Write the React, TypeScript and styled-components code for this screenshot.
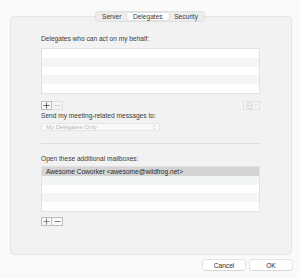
import styled, { createGlobalStyle } from "styled-components";

const GlobalStyle = createGlobalStyle`
  html, body {
    margin: 0;
    padding: 0;
    background: #fafafa;
  }
  body {
    font-family: "Liberation Sans", Arial, sans-serif;
    color: #333;
  }
`;

const Window = styled.div`
  width: 300px;
  height: 279px;
  box-sizing: border-box;
  padding: 11px 8px 0 10px;
  display: flex;
  flex-direction: column;
`;

const TabBar = styled.div`
  align-self: center;
  position: relative;
  z-index: 1;
  display: flex;
  height: 11px;
  box-sizing: border-box;
  margin-left: -2px;
  margin-bottom: -6px;
  padding: 1px;
  border: 1px solid #e0e0e0;
  border-radius: 3px;
  background: #ececec;
`;

const Tab = styled.div<{ active?: boolean }>`
  height: 100%;
  display: flex;
  align-items: center;
  justify-content: center;
  padding: 0 ${(p) => (p.active ? "6px" : "5.5px")};
  font-size: 6.6px;
  color: #3a3a3a;
  border-radius: 2px;
  background: ${(p) => (p.active ? "#fff" : "transparent")};
  box-shadow: ${(p) => (p.active ? "0 0 0 0.5px #d8d8d8" : "none")};
`;

const Panel = styled.div`
  height: 239px;
  box-sizing: border-box;
  padding: 18px 31px 0 30px;
  border: 1px solid #e5e5e5;
  border-radius: 4px;
  background: #f2f2f2;
  display: flex;
  flex-direction: column;
`;

const Label = styled.div<{ gap?: number; top?: number }>`
  font-size: 6.6px;
  line-height: 8px;
  color: #3a3a3a;
  margin-top: ${(p) => p.top ?? 0}px;
  margin-bottom: ${(p) => p.gap ?? 4}px;
`;

const List = styled.div`
  border: 1px solid #e2e2e2;
  background: #fff;
  display: flex;
  flex-direction: column;
`;

const Row = styled.div<{ striped?: boolean; selected?: boolean }>`
  height: 8.8px;
  box-sizing: border-box;
  padding-left: 4px;
  display: flex;
  align-items: center;
  font-size: 6.6px;
  color: #2a2a2a;
  background: ${(p) =>
    p.selected ? "#d4d4d4" : p.striped ? "#f4f5f5" : "#fff"};
`;

const ButtonRow = styled.div<{ top: number }>`
  margin-top: ${(p) => p.top}px;
  display: flex;
  justify-content: space-between;
  align-items: center;
`;

const PlusMinus = styled.div`
  display: flex;
`;

const SquareButton = styled.div<{ enabled?: boolean }>`
  width: 11px;
  height: 9px;
  box-sizing: border-box;
  display: flex;
  align-items: center;
  justify-content: center;
  border: 1px solid ${(p) => (p.enabled ? "#bdbdbd" : "#e0e0e0")};
  background: ${(p) => (p.enabled ? "#f8f8f8" : "#f4f4f4")};
  & + & {
    border-left: none;
  }
`;

const ActionPopup = styled.div`
  width: 17px;
  height: 9px;
  box-sizing: border-box;
  border: 1px solid #e0e0e0;
  background: #f5f5f5;
  display: flex;
  align-items: center;
  justify-content: center;
  gap: 1px;
`;

const SelectBox = styled.div`
  width: 119px;
  height: 8px;
  box-sizing: border-box;
  margin-top: 3px;
  padding: 0 3px 0 4px;
  border: 1px solid #e6e6e6;
  border-radius: 2px;
  background: #f9f9f9;
  display: flex;
  align-items: center;
  justify-content: space-between;
  font-size: 6px;
  color: #b8b8b8;
`;

const Separator = styled.div`
  height: 1px;
  background: #dedede;
  margin: 12px 0 11px;
`;

const Footer = styled.div`
  display: flex;
  justify-content: flex-end;
  gap: 5px;
  margin-top: 5px;
`;

const PushButton = styled.div`
  width: 42px;
  height: 10px;
  box-sizing: border-box;
  border-radius: 2px;
  background: #fff;
  box-shadow: 0 0 0 0.5px #d0d0d0, 0 0.5px 1px rgba(0, 0, 0, 0.12);
  display: flex;
  align-items: center;
  justify-content: center;
  font-size: 6.6px;
  color: #2a2a2a;
`;

const PlusIcon = ({ color }: { color: string }) => (
  <svg width="7" height="7" viewBox="0 0 7 7">
    <path d="M3.5 0.5v6M0.5 3.5h6" stroke={color} strokeWidth="0.9" />
  </svg>
);

const MinusIcon = ({ color }: { color: string }) => (
  <svg width="7" height="7" viewBox="0 0 7 7">
    <path d="M0.5 3.5h6" stroke={color} strokeWidth="0.9" />
  </svg>
);

const CircleMinus = () => (
  <svg width="7" height="7" viewBox="0 0 7 7">
    <circle cx="3.5" cy="3.5" r="2.9" fill="none" stroke="#c4c4c4" strokeWidth="0.7" />
    <path d="M1.9 3.5h3.2" stroke="#c4c4c4" strokeWidth="0.7" />
  </svg>
);

const ChevronDown = () => (
  <svg width="4" height="4" viewBox="0 0 4 4">
    <path d="M0.6 1.3L2 2.7L3.4 1.3" fill="none" stroke="#c4c4c4" strokeWidth="0.6" />
  </svg>
);

const UpDown = () => (
  <svg width="4" height="6" viewBox="0 0 4 6">
    <path d="M0.8 2.2L2 1L3.2 2.2M0.8 3.8L2 5L3.2 3.8" fill="none" stroke="#c0c0c0" strokeWidth="0.6" />
  </svg>
);

const rows = [0, 1, 2, 3, 4];

export default function App() {
  return (
    <>
      <GlobalStyle />
      <Window>
        <TabBar>
          <Tab>Server</Tab>
          <Tab active>Delegates</Tab>
          <Tab>Security</Tab>
        </TabBar>
        <Panel>
          <Label gap={5}>Delegates who can act on my behalf:</Label>
          <List>
            {rows.map((i) => (
              <Row key={i} striped={i % 2 === 1} />
            ))}
          </List>
          <ButtonRow top={7}>
            <PlusMinus>
              <SquareButton enabled>
                <PlusIcon color="#555" />
              </SquareButton>
              <SquareButton>
                <MinusIcon color="#cfcfcf" />
              </SquareButton>
            </PlusMinus>
            <ActionPopup>
              <CircleMinus />
              <ChevronDown />
            </ActionPopup>
          </ButtonRow>
          <Label gap={0} top={2}>
            Send my meeting-related messages to:
          </Label>
          <SelectBox>
            <span>My Delegates Only</span>
            <UpDown />
          </SelectBox>
          <Separator />
          <Label gap={3}>Open these additional mailboxes:</Label>
          <List>
            {rows.map((i) => (
              <Row key={i} striped={i % 2 === 1} selected={i === 0}>
                {i === 0 ? "Awesome Coworker <awesome@wildfrog.net>" : null}
              </Row>
            ))}
          </List>
          <ButtonRow top={5}>
            <PlusMinus>
              <SquareButton enabled>
                <PlusIcon color="#777" />
              </SquareButton>
              <SquareButton enabled>
                <MinusIcon color="#777" />
              </SquareButton>
            </PlusMinus>
          </ButtonRow>
        </Panel>
        <Footer>
          <PushButton>Cancel</PushButton>
          <PushButton>OK</PushButton>
        </Footer>
      </Window>
    </>
  );
}
